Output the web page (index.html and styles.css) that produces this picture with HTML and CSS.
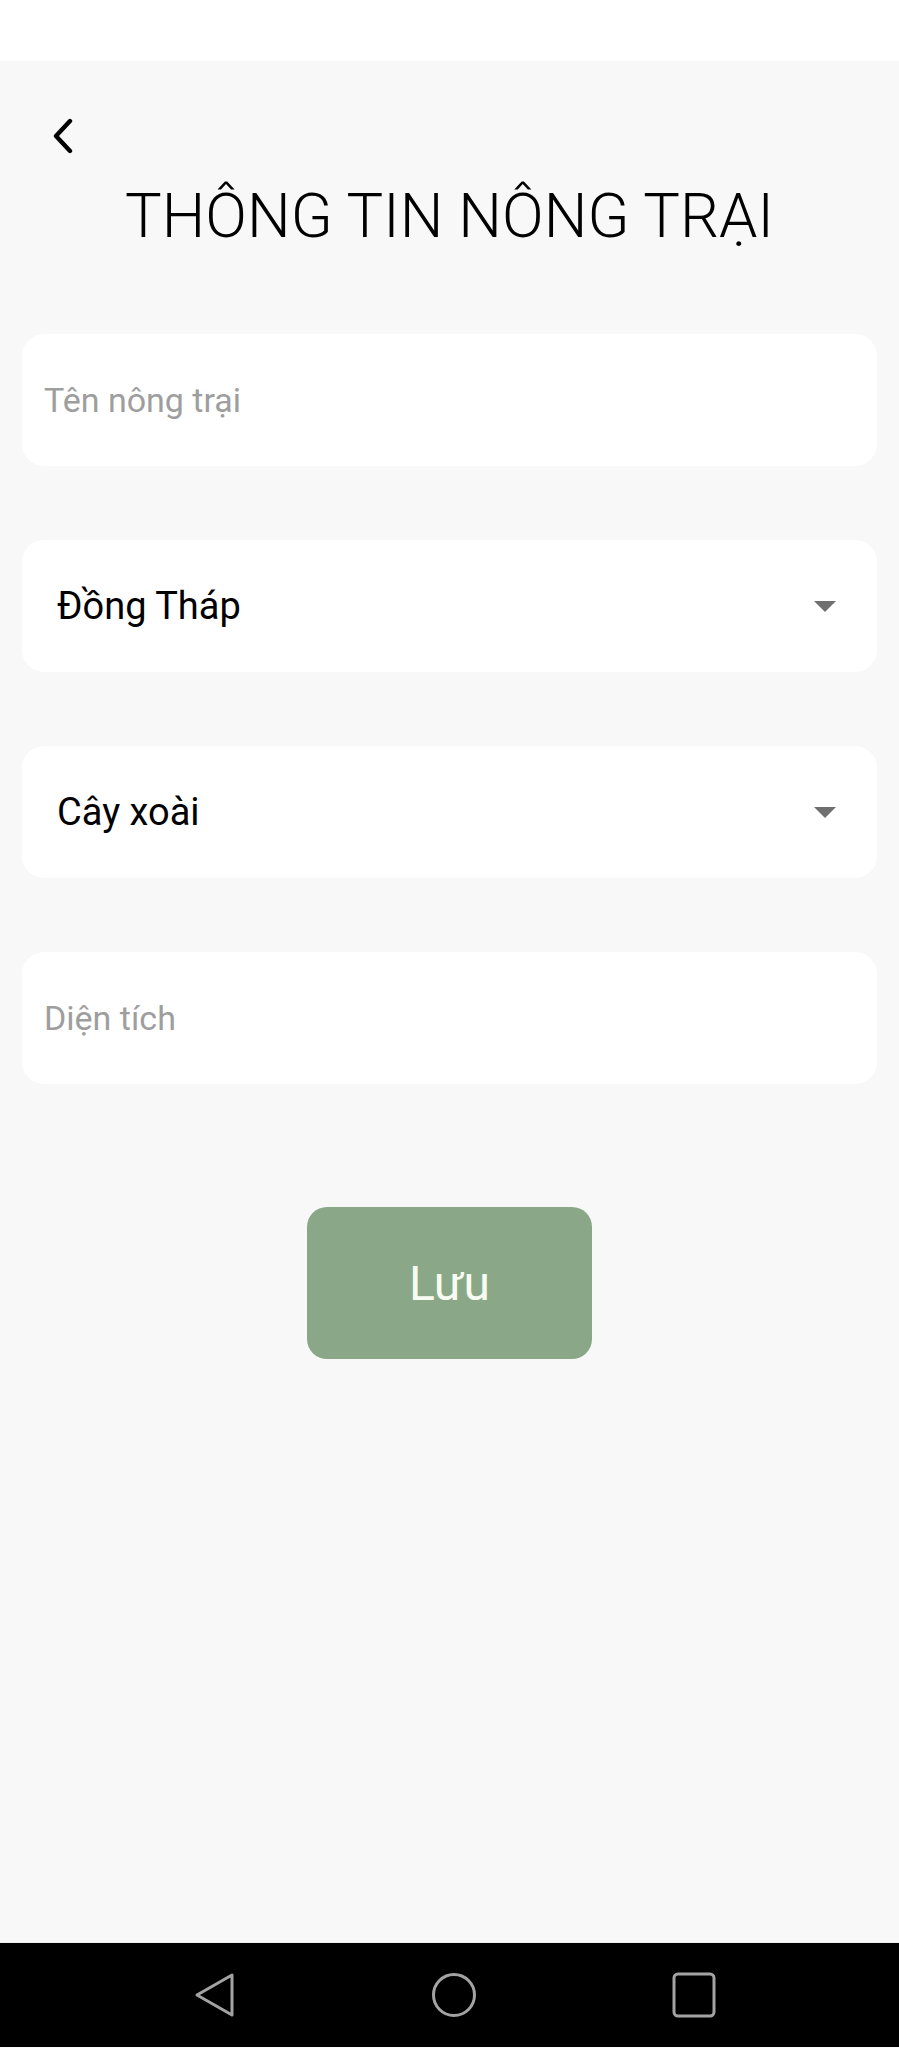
FILE: index.html
```html
<!DOCTYPE html>
<html lang="vi">
<head>
<meta charset="utf-8">
<title>Thông tin nông trại</title>
<link rel="stylesheet" href="styles.css">
</head>
<body>
<div class="status-bar"></div>
<main class="screen">
  <header class="top">
    <button class="back" type="button" aria-label="Quay lại">
      <svg width="24" height="36" viewBox="0 0 24 36"><polyline points="19,3 5,18 19,33" fill="none" stroke="#000" stroke-width="4.4" stroke-linecap="round" stroke-linejoin="round"/></svg>
    </button>
    <h1 class="title">THÔNG TIN NÔNG TRẠI</h1>
  </header>
  <form class="form">
    <div class="field"><span class="placeholder">Tên nông trại</span></div>
    <div class="field select"><span class="value">Đồng Tháp</span><span class="caret"></span></div>
    <div class="field select"><span class="value">Cây xoài</span><span class="caret"></span></div>
    <div class="field"><span class="placeholder">Diện tích</span></div>
    <button class="save" type="button">Lưu</button>
  </form>
</main>
<nav class="nav-bar">
  <svg class="nav-icon" width="48" height="48" viewBox="0 0 48 48"><polygon points="42,4 42,44 7,24" fill="none" stroke="#a3a3a3" stroke-width="3" stroke-linejoin="round"/></svg>
  <svg class="nav-icon" width="48" height="48" viewBox="0 0 48 48"><ellipse cx="24" cy="24" rx="20.5" ry="20.5" fill="none" stroke="#a3a3a3" stroke-width="3"/></svg>
  <svg class="nav-icon" width="48" height="48" viewBox="0 0 48 48"><rect x="4" y="3" width="40" height="42" rx="4" fill="none" stroke="#a3a3a3" stroke-width="3"/></svg>
</nav>
</body>
</html>
```

FILE: styles.css
```css
* { box-sizing: border-box; }
html, body {
  margin: 0;
  padding: 0;
  background: #f8f8f8;
  font-family: Roboto, "Noto Sans", "Liberation Sans", sans-serif;
}
.status-bar {
  height: 61px;
  background: #ffffff;
}
.screen {
  height: 1882px;
  background: #f8f8f8;
  border-bottom: 1px solid #eeeeee;
  display: flex;
  flex-direction: column;
  padding-top: 58px;
}
.top {
  display: flex;
  flex-direction: column;
}
.back {
  width: 24px;
  height: 36px;
  margin-left: 51px;
  margin-top: -1px;
  padding: 0;
  border: 0;
  background: transparent;
  display: flex;
}
.title {
  margin: 27px 0 0;
  height: 70px;
  line-height: 70px;
  font-size: 61.5px;
  font-weight: 300;
  color: #000;
  text-align: center;
  padding-left: 0;
}
.form {
  display: flex;
  flex-direction: column;
  gap: 74px;
  margin: 83px 22px 0;
}
.field {
  height: 132px;
  background: #ffffff;
  border-radius: 22px;
  display: flex;
  align-items: center;
  padding: 0 22px;
}
.placeholder {
  font-size: 34px;
  color: #9e9e9e;
}
.field.select {
  padding: 0 41px 0 35px;
  justify-content: space-between;
}
.value {
  font-size: 38px;
  color: #000;
}
.caret {
  width: 0;
  height: 0;
  border-left: 11px solid transparent;
  border-right: 11px solid transparent;
  border-top: 11px solid #6f6f6f;
}
.save {
  align-self: center;
  width: 285px;
  height: 152px;
  margin-top: 49px;
  border: 0;
  border-radius: 20px;
  background: #8aa887;
  color: #f7fcf2;
  font-family: Roboto, "Noto Sans", sans-serif;
  font-size: 48px;
  font-weight: 400;
}
.nav-bar {
  height: 104px;
  background: #000;
  display: flex;
  align-items: center;
  justify-content: center;
  gap: 192px;
  padding-left: 8px;
}
.nav-icon { display: block; }
```
